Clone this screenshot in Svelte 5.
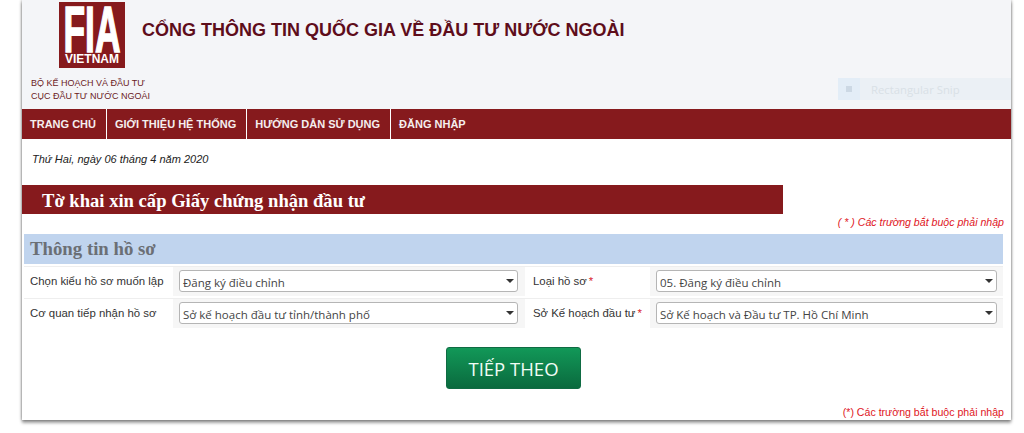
<script>
    const rows = [
        {
            label: "Chọn kiểu hồ sơ muốn lập",
            value: "Đăng ký điều chỉnh",
            label2: "Loại hồ sơ",
            value2: "05. Đăng ký điều chỉnh"
        },
        {
            label: "Cơ quan tiếp nhận hồ sơ",
            value: "Sở kế hoạch đầu tư tỉnh/thành phố",
            label2: "Sở Kế hoạch đầu tư",
            value2: "Sở Kế hoạch và Đầu tư TP. Hồ Chí Minh"
        }
    ];

    const menu = ["TRANG CHỦ", "GIỚI THIỆU HỆ THỐNG", "HƯỚNG DẪN SỬ DỤNG", "ĐĂNG NHẬP"];
</script>

<div class="screen">
    <div class="page">
        <header class="header">
            <div class="brand">
                <svg class="logo" width="66" height="66" viewBox="0 0 66 66">
                    <rect width="66" height="66" fill="#861a1d" />
                    <text x="4.5" y="49.5" font-family="Liberation Sans" font-weight="700" font-size="64" fill="#fff" stroke="#fff" stroke-width="1.6" textLength="57" lengthAdjust="spacingAndGlyphs">FIA</text>
                    <text x="33" y="60.5" text-anchor="middle" font-family="Liberation Sans" font-weight="700" font-size="12" fill="#fff">VIETNAM</text>
                </svg>
                <h1>CỔNG THÔNG TIN QUỐC GIA VỀ ĐẦU TƯ NƯỚC NGOÀI</h1>
            </div>
            <p class="org">BỘ KẾ HOẠCH VÀ ĐẦU TƯ<br />CỤC ĐẦU TƯ NƯỚC NGOÀI</p>
        </header>

        <nav class="nav">
            {#each menu as item}
                <span class="nav-item">{item}</span>
            {/each}
        </nav>

        <p class="date">Thứ Hai, ngày 06 tháng 4 năm 2020</p>

        <h2 class="form-title">Tờ khai xin cấp Giấy chứng nhận đầu tư</h2>
        <p class="required top">( * ) Các trường bắt buộc phải nhập</p>

        <section class="panel">
            <h3>Thông tin hồ sơ</h3>
            {#each rows as row}
                <div class="row">
                    <div class="cell label">{row.label}</div>
                    <div class="cell control">
                        <div class="select"><span>{row.value}</span><i class="caret"></i></div>
                    </div>
                    <div class="cell label second">{row.label2}<b>*</b></div>
                    <div class="cell control">
                        <div class="select"><span>{row.value2}</span><i class="caret"></i></div>
                    </div>
                </div>
            {/each}
        </section>

        <div class="actions">
            <button class="next">TIẾP THEO</button>
        </div>

        <p class="required bottom">(*) Các trường bắt buộc phải nhập</p>

        <div class="snip">
            <span class="snip-icon"><i></i></span>
            <span class="snip-text">Rectangular Snip</span>
        </div>
    </div>
</div>

<style>
    :global(body) {
        background: #fff;
    }

    .screen {
        height: 433px;
        overflow: hidden;
    }

    .page {
        position: relative;
        box-sizing: border-box;
        width: 989px;
        height: 420px;
        margin-left: 22px;
        background: #fff;
        box-shadow: 0 3px 3px rgba(0, 0, 0, 0.35), 0 0 3px rgba(0, 0, 0, 0.45);
        font-family: "Liberation Sans", Arial, sans-serif;
    }

    .header {
        box-sizing: border-box;
        height: 109px;
        padding: 2px 0 0 9px;
        background: #f4f5f8;
    }

    .brand {
        display: flex;
        align-items: flex-start;
        padding-left: 28px;
    }

    .logo {
        display: block;
        flex: none;
        overflow: visible;
    }

    h1 {
        margin: 17px 0 0 17px;
        font-size: 18px;
        line-height: 22px;
        font-weight: 700;
        color: #5e0d1b;
        white-space: nowrap;
    }

    .org {
        margin: 9px 0 0;
        font-size: 9px;
        line-height: 13px;
        color: #6b1b1e;
    }

    .nav {
        display: flex;
        height: 30px;
        background: #861a1d;
    }

    .nav-item {
        box-sizing: border-box;
        padding: 0 10px 0 8px;
        font-size: 11px;
        line-height: 30px;
        font-weight: 700;
        color: #f5eeee;
        border-right: 1px solid #fff;
        white-space: nowrap;
    }

    .nav-item:last-child {
        border-right: 0;
    }

    .date {
        margin: 0;
        padding: 13px 0 0 10px;
        font-size: 11px;
        line-height: 14px;
        font-style: italic;
        color: #222;
    }

    .form-title {
        box-sizing: border-box;
        width: 761px;
        height: 29px;
        margin: 19px 0 0;
        padding-left: 20px;
        background: #861a1d;
        font-family: "Liberation Serif", "Times New Roman", serif;
        font-size: 18.6px;
        line-height: 32px;
        font-weight: 700;
        color: #fff;
    }

    .required {
        margin: 0;
        padding-right: 7px;
        text-align: right;
        color: #e0161e;
    }

    .top {
        padding-top: 2px;
        font-size: 10.6px;
        line-height: 13px;
        font-style: italic;
    }

    .panel {
        margin: 5px 8px 0 2px;
    }

    h3 {
        height: 30px;
        margin: 0 0 2px;
        padding-left: 6px;
        background: #c0d4ee;
        font-family: "Liberation Serif", "Times New Roman", serif;
        font-size: 18.8px;
        line-height: 30px;
        font-weight: 700;
        color: #6b6f75;
    }

    .row {
        display: flex;
        height: 30px;
        margin-bottom: 2px;
        border-top: 1px solid #eeeeee;
        box-sizing: border-box;
    }

    .cell {
        box-sizing: border-box;
    }

    .label {
        flex: none;
        width: 149px;
        padding-left: 6px;
        font-size: 11.4px;
        line-height: 29px;
        color: #333;
        white-space: nowrap;
    }

    .second {
        width: 125px;
        padding-left: 8px;
    }

    .label b {
        margin-left: 2px;
        color: #d9232e;
        font-weight: 400;
    }

    .control {
        flex: none;
        width: 352px;
        padding: 3px 7px 0 6px;
        background: #f6f6f6;
    }

    .row .control:last-child {
        width: 353px;
        padding-right: 6px;
    }

    .select {
        position: relative;
        box-sizing: border-box;
        height: 22px;
        padding-left: 3px;
        background: #fff;
        border: 1px solid #b5b5b5;
        border-radius: 3px;
        font-family: "Open Sans", "Noto Sans", sans-serif;
        font-size: 11.5px;
        line-height: 23px;
        color: #444;
        white-space: nowrap;
    }

    .caret {
        position: absolute;
        top: 8px;
        right: 3px;
        width: 0;
        height: 0;
        border-left: 4px solid transparent;
        border-right: 4px solid transparent;
        border-top: 4px solid #333;
    }

    .actions {
        display: flex;
        justify-content: center;
        padding: 17px 8px 0 2px;
    }

    .next {
        width: 135px;
        height: 42px;
        padding: 0;
        border: 1px solid #0f6b43;
        border-radius: 3px;
        background: linear-gradient(#129858, #0a6a3e);
        font-family: "Open Sans", "Noto Sans", sans-serif;
        font-size: 18.5px;
        color: #f0fdf6;
    }

    .bottom {
        position: absolute;
        right: 0;
        bottom: 1px;
        font-size: 10.6px;
        line-height: 14px;
    }

    /* leftover screen snipping overlay from the capture */
    .snip {
        position: absolute;
        top: 78px;
        right: 0;
        display: flex;
        align-items: center;
        width: 173px;
        height: 22px;
        background: #ebf0f5;
    }

    .snip-icon {
        display: flex;
        align-items: center;
        justify-content: center;
        width: 22px;
        height: 22px;
        background: #e3edf7;
    }

    .snip-icon i {
        width: 6px;
        height: 6px;
        background: #ccd8e4;
    }

    .snip-text {
        margin-left: 11px;
        font-family: "Open Sans", sans-serif;
        font-size: 11.3px;
        color: #d9e0e6;
    }
</style>
